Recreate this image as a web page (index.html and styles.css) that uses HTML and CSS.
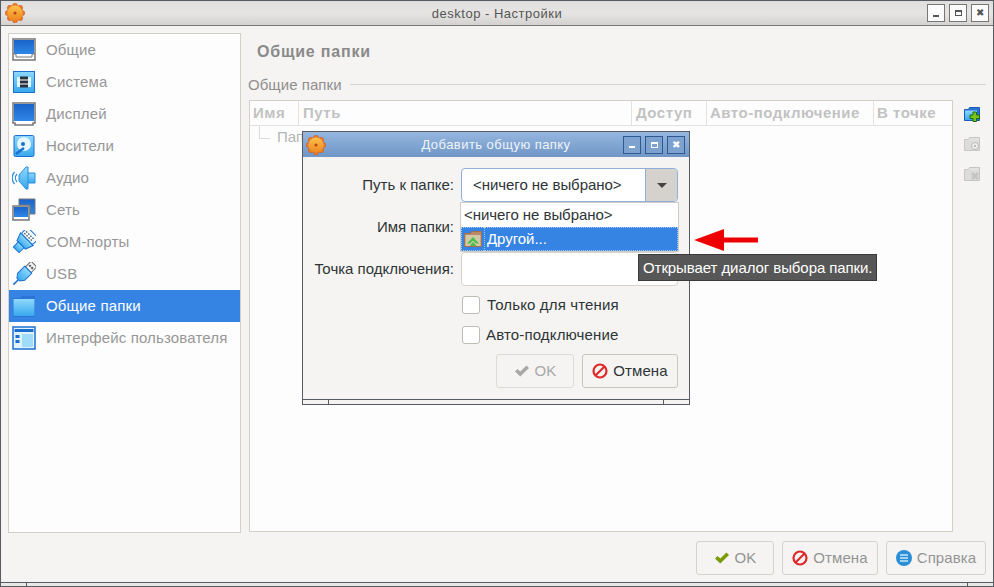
FILE: index.html
```html
<!DOCTYPE html>
<html lang="ru">
<head>
<meta charset="utf-8">
<title>desktop - Настройки</title>
<link rel="stylesheet" href="styles.css">
</head>
<body>
<svg class="defs" width="0" height="0" aria-hidden="true">
  <defs>
    <linearGradient id="gearg" x1="0" y1="0" x2="0" y2="1"><stop offset="0" stop-color="#fcc24a"/><stop offset="1" stop-color="#f0861f"/></linearGradient>
    <linearGradient id="sky" x1="0" y1="0" x2="0" y2="1"><stop offset="0" stop-color="#8fd8fb"/><stop offset="1" stop-color="#38a8ee"/></linearGradient>
    <linearGradient id="scr" x1="0" y1="0" x2="0" y2="1"><stop offset="0" stop-color="#1a63c9"/><stop offset="1" stop-color="#2f86e6"/></linearGradient>
    <symbol id="gear" viewBox="0 0 20 20">
      <g fill="#ea7a22" stroke="#c9582a" stroke-width=".5">
        <circle cx="10" cy="2.800" r="2.600"/><circle cx="10" cy="17.200" r="2.600"/><circle cx="2.800" cy="10" r="2.600"/><circle cx="17.200" cy="10" r="2.600"/>
        <circle cx="4.900" cy="4.900" r="2.600"/><circle cx="15.100" cy="4.900" r="2.600"/><circle cx="4.900" cy="15.100" r="2.600"/><circle cx="15.100" cy="15.100" r="2.600"/>
      </g>
      <circle cx="10" cy="10" r="7.600" fill="url(#gearg)"/>
      <circle cx="10" cy="10" r="1.500" fill="#b5451b"/>
    </symbol>
    <symbol id="folder-add" viewBox="0 0 16 16">
      <path d="M.5 3.500h4l1-2h10v13H.5z" fill="#2a74d6" stroke="#1a5cb8"/><rect x="1" y="4.500" width="12" height="9.500" fill="url(#sky)"/>
      <path d="M9 6h3.500v3H15.500v3.500h-3V15.500H9V12.500H6V9h3z" fill="#7ac41e" stroke="#1f6a10"/>
    </symbol>
    <symbol id="folder-gray" viewBox="0 0 16 16">
      <path d="M.5 3.500h4l1-2h10v13H.5z" fill="#e2e2e0" stroke="#c6c6c4"/><rect x="1" y="4.500" width="14" height="9.500" fill="#dcdcda"/>
    </symbol>
    <symbol id="check" viewBox="0 0 16 12"><path d="M1 6.500 3.500 4l2.800 2.600L12.500.5 15 3l-8.700 8.500z"/></symbol>
    <symbol id="cancel" viewBox="0 0 16 16"><circle cx="8" cy="8" r="6.500" fill="none" stroke="#e0282c" stroke-width="2.200"/><path d="M3.500 12.500l9-9" stroke="#e0282c" stroke-width="2.200"/></symbol>
  </defs>
</svg>

<div class="window">
  <header class="titlebar">
    <svg class="tb-icon"><use href="#gear"/></svg>
    <span class="tb-title">desktop - Настройки</span>
    <div class="tb-btns">
      <span class="tb-btn"><i class="g-min"></i></span>
      <span class="tb-btn"><i class="g-max"></i></span>
      <span class="tb-btn tb-x">✖</span>
    </div>
  </header>

  <div class="content">
    <nav class="sidebar">
      <div class="item"><svg class="ico" viewBox="0 0 24 24"><path d="M1 1h22v21H1z" fill="#fff" stroke="#777" stroke-width="1.500"/><rect x="2" y="2" width="20" height="14" fill="url(#scr)"/><path d="M1 16h3v3h16v-3h3" fill="none" stroke="#777"/></svg><span>Общие</span></div>
      <div class="item"><svg class="ico" viewBox="0 0 24 24"><rect x="1.500" y="1.500" width="21" height="21" fill="url(#sky)" stroke="#1c6fd0"/><rect x="5" y="7" width="14" height="10" fill="#d8f2ff"/><rect x="8" y="6.500" width="8" height="11" fill="#2a3440"/><path d="M5 10h14M5 14h14" stroke="#fff"/></svg><span>Система</span></div>
      <div class="item"><svg class="ico" viewBox="0 0 24 24"><path d="M1 1h22v20h-2v2H3v-2H1z" fill="#fff" stroke="#777" stroke-width="1.500"/><rect x="2" y="2" width="20" height="17" fill="url(#scr)"/></svg><span>Дисплей</span></div>
      <div class="item"><svg class="ico" viewBox="0 0 24 24"><rect x="2" y="1.500" width="20" height="21" rx="1.500" fill="url(#sky)" stroke="#1c6fd0"/><circle cx="12" cy="10" r="7" fill="#e6f7ff"/><circle cx="11" cy="10" r="2" fill="#1c6fd0"/><path d="M4 20l8-6" stroke="#1c6fd0" stroke-width="2.500"/></svg><span>Носители</span></div>
      <div class="item"><svg class="ico" viewBox="0 0 24 24"><path d="M15 7h8v10h-8z" fill="url(#sky)" stroke="#2b8de0"/><path d="M7 9l7-8h2v22h-2l-7-8z" fill="url(#sky)" stroke="#2b8de0"/><path d="M5 8a6 6 0 0 0 0 8M2.500 6a9 9 0 0 0 0 12" fill="none" stroke="#2b8de0" stroke-width="1.200"/></svg><span>Аудио</span></div>
      <div class="item"><svg class="ico" viewBox="0 0 24 24"><path d="M7 1h16v15h-5V7H7z" fill="url(#scr)" stroke="#777"/><path d="M1 8h16v14H1z" fill="#fff" stroke="#777" stroke-width="1.500"/><rect x="2" y="9" width="14" height="10" fill="url(#scr)"/></svg><span>Сеть</span></div>
      <div class="item"><svg class="ico" viewBox="0 0 24 24"><g transform="rotate(45 12 12)"><rect x="4" y="-1" width="16" height="9" rx="2" fill="#eef8ff" stroke="#1c6fd0"/><path d="M6 3h12M6 5.500h12" stroke="#555" stroke-width="1.300" stroke-dasharray="1.500 1.500"/><path d="M3 8h18l-3 8H6z" fill="url(#sky)" stroke="#1c6fd0"/><rect x="8" y="16" width="8" height="7" fill="url(#sky)" stroke="#1c6fd0"/></g></svg><span>COM-порты</span></div>
      <div class="item"><svg class="ico" viewBox="0 0 24 24"><g transform="rotate(45 12 12)"><rect x="8" y="-2" width="8" height="8" fill="#f6f6f6" stroke="#666"/><rect x="9.500" y="1" width="2" height="2" fill="#555"/><rect x="12.500" y="1" width="2" height="2" fill="#555"/><path d="M7 6h10v10l-3 4h-4l-3-4z" fill="url(#sky)" stroke="#1c6fd0"/><path d="M12 20v7" stroke="#1c6fd0" stroke-width="1.500"/></g></svg><span>USB</span></div>
      <div class="item active"><svg class="ico" viewBox="0 0 24 24"><path d="M1 4h7l2-2h13v21H1z" fill="#2a74d6"/><rect x="1.500" y="5" width="21" height="17" fill="url(#sky)"/></svg><span>Общие папки</span></div>
      <div class="item"><svg class="ico" viewBox="0 0 24 24"><rect x="1" y="1" width="22" height="22" fill="#dff3ff" stroke="#1c6fd0" stroke-width="1.500"/><rect x="2.500" y="3" width="19" height="3" fill="#1c6fd0"/><rect x="10" y="8" width="11" height="13" fill="#9fdcfa"/><rect x="3.500" y="9" width="4" height="3" fill="#1c6fd0"/><rect x="3.500" y="14" width="4" height="3" fill="#1c6fd0"/></svg><span>Интерфейс пользователя</span></div>
    </nav>

    <main class="main">
      <h1 class="page-title">Общие папки</h1>
      <div class="group-head"><span>Общие папки</span><i class="group-rule"></i></div>
      <div class="table-row">
        <section class="table">
          <div class="thead">
            <span class="th w1">Имя</span>
            <span class="th w2">Путь</span>
            <span class="th w3">Доступ</span>
            <span class="th w4">Авто-подключение</span>
            <span class="th w5">В точке</span>
          </div>
          <div class="tree"><i class="tree-line"></i><span>Папки машины</span></div>
        </section>
        <div class="side-tools">
          <svg class="tool"><use href="#folder-add"/></svg>
          <svg class="tool"><use href="#folder-gray"/><circle cx="11" cy="10" r="3.500" fill="#eee" stroke="#bbb"/><circle cx="11" cy="10" r="1" fill="#aaa"/></svg>
          <svg class="tool"><use href="#folder-gray"/><path d="M8 7l6 6M14 7l-6 6" stroke="#c4c4c2" stroke-width="2.500"/></svg>
        </div>
      </div>
    </main>
  </div>

  <footer class="footer">
    <button class="btn b-ok dim"><svg class="b-ico c-olive"><use href="#check"/></svg>OK</button>
    <button class="btn b-cancel dim"><svg class="b-ico"><use href="#cancel"/></svg>Отмена</button>
    <button class="btn b-help dim"><svg class="b-ico" viewBox="0 0 16 16"><circle cx="8" cy="8" r="8" fill="#2b8fd8"/><path d="M4 5h8M4 8h8M4 11h8" stroke="#cfe8f8" stroke-width="1.600"/></svg>Справка</button>
  </footer>
  <div class="strip strip-main"><i class="tick t1"></i><i class="tick t2"></i></div>

  <div class="dialog">
    <header class="d-title">
      <svg class="d-icon"><use href="#gear"/></svg>
      <span class="d-text">Добавить общую папку</span>
      <div class="d-btns">
        <span class="d-btn"><i class="g-min w"></i></span>
        <span class="d-btn"><i class="g-max w"></i></span>
        <span class="d-btn d-x">✖</span>
      </div>
    </header>
    <div class="form">
      <label class="lbl">Путь к папке:</label>
      <div class="combo"><span class="combo-text">&lt;ничего не выбрано&gt;</span><span class="combo-arrow"><i></i></span></div>
      <label class="lbl">Имя папки:</label>
      <div class="field"></div>
      <label class="lbl">Точка подключения:</label>
      <div class="field"></div>
      <label class="chk"><i class="box"></i><span class="pad">Только для чтения</span></label>
      <label class="chk"><i class="box"></i><span>Авто-подключение</span></label>
      <div class="d-actions">
        <button class="btn b-ok dim2"><svg class="b-ico c-gray"><use href="#check"/></svg>OK</button>
        <button class="btn b-cancel"><svg class="b-ico"><use href="#cancel"/></svg>Отмена</button>
      </div>
    </div>
    <div class="strip strip-dlg"><i class="tick t3"></i><i class="tick t4"></i></div>
  </div>

  <ul class="popup">
    <li class="pop-item">&lt;ничего не выбрано&gt;</li>
    <li class="pop-item sel">
      <svg class="pop-ico" viewBox="0 0 18 16"><path d="M.5 2.500h6l1-2h10v15H.5z" fill="#b98a68" stroke="#a06f50"/><rect x="1.500" y="4" width="15" height="11" fill="#d2c9a8"/><path d="M9 6l6 6.500h-3L9 9.500 6 12.500H3zM9 11l3.500 4h-7z" fill="#4fbf4a"/></svg>
      <span class="pop-label">Другой...</span>
    </li>
  </ul>

  <svg class="arrow" viewBox="0 0 64 22"><path d="M0 11 30 0v8.500h34v5H30V22z" fill="#ee0000"/></svg>

  <div class="tooltip">Открывает диалог выбора папки.</div>
</div>
</body>
</html>
```
FILE: styles.css
```css
* { box-sizing: border-box; }
html, body { margin: 0; padding: 0; }
body { width: 994px; height: 587px; overflow: hidden; font-family: "Liberation Sans", Arial, sans-serif; font-size: 15px; color: #2e3436; background: #fff; }
.defs { position: absolute; }
i { display: block; font-style: normal; }

.window { position: relative; width: 994px; height: 587px; display: flex; flex-direction: column; background: #f5f4f2; border: 1px solid #555b60; border-width: 1px 1px 0 1px; }

.titlebar { flex: none; height: 25px; display: flex; align-items: center; position: relative; background: linear-gradient(#dededc, #e6e5e3 50%, #d3d2d0); border-bottom: 1px solid #77787a; padding-left: 4px; }
.tb-icon { width: 20px; height: 20px; }
.tb-title { position: absolute; left: 0; right: 0; text-align: center; font-size: 13px; letter-spacing: .5px; color: #555; }
.tb-btns { margin-left: auto; display: flex; gap: 4px; padding-right: 4px; position: relative; }
.tb-btn { width: 18px; height: 18px; background: #fbfbfb; border: 1px solid #777; display: flex; align-items: center; justify-content: center; color: #555; font-size: 10px; line-height: 1; }
.g-min { width: 6px; height: 2px; background: #555; margin-top: 5px; }
.g-max { width: 7px; height: 6px; border: 1px solid #555; border-top-width: 2px; }
.g-min.w { background: #fff; }
.g-max.w { border-color: #fff; }

.content { flex: none; height: 508px; display: flex; padding: 7px 7px 0 7px; }
.sidebar { flex: none; width: 233px; height: 500px; background: #fdfdfd; border: 1px solid #d3cfc9; }
.item { height: 32px; display: flex; align-items: center; color: #979797; padding-left: 3px; }
.item span { margin: 0 0 2px 10px; letter-spacing: .15px; }
.item.active { background: #3584e4; color: #fff; }
.ico { width: 24px; height: 24px; flex: none; }

.main { flex: 1; min-width: 0; padding-left: 7px; display: flex; flex-direction: column; }
.page-title { margin: 9px 0 0 9px; font-size: 16px; line-height: 20px; font-weight: bold; color: #8a8a8a; letter-spacing: .8px; }
.group-head { margin-top: 14px; display: flex; align-items: center; height: 16px; color: #8f8f8f; letter-spacing: .05px; }
.group-rule { flex: 1; height: 1px; background: #d5d2cd; margin-left: 8px; }
.table-row { margin: 8px 0 0 1px; display: flex; height: 432px; }
.table { flex: none; width: 704px; height: 432px; background: #fdfdfd; border: 1px solid #d3cfc9; position: relative; }
.thead { display: flex; height: 25px; border-bottom: 1px solid #e4e2de; }
.th { border-right: 1px solid #e4e2de; padding-left: 3px; font-weight: bold; color: #c2c2c2; line-height: 24px; letter-spacing: .5px; overflow: hidden; white-space: nowrap; }
.w1 { width: 49px; } .w2 { width: 333px; padding-left: 4px; } .w3 { width: 75px; padding-left: 4px; } .w4 { width: 167px; } .w5 { width: 78px; border-right: 0; }
.tree { position: relative; padding: 2px 0 0 27px; color: #b5b5b5; line-height: 18px; }
.tree-line { position: absolute; left: 9px; top: 0; width: 11px; height: 13px; border-left: 1px solid #dcdcdc; border-bottom: 1px solid #dcdcdc; }
.side-tools { flex: none; margin-left: 11px; padding-top: 6px; display: flex; flex-direction: column; gap: 14px; }
.tool { width: 16px; height: 16px; }

.footer { flex: none; height: 48px; display: flex; justify-content: flex-end; gap: 8px; padding: 7px 7px 0 0; }
.btn { height: 34px; padding: 0 0 2px; background: #f5f4f2; border: 1px solid #d5d2cd; border-radius: 3px; font: 15px "Liberation Sans", Arial, sans-serif; color: #2e3436; display: flex; align-items: center; justify-content: center; letter-spacing: .1px; }
.b-ok { width: 78px; } .b-cancel { width: 96px; } .b-help { width: 100px; }
.dim { color: #949494; }
.dim2 { color: #a8a8a8; }
.b-ico { width: 16px; height: 16px; margin: 2px 5px 0 0; flex: none; }
.c-olive { fill: #7a9a01; } .c-gray { fill: #a8a8a8; }

.strip { position: relative; flex: none; height: 5px; border-top: 1px solid #555b60; border-bottom: 1px solid #555b60; background: #f5f4f2; }
.strip-main { margin-top: auto; background: #e8e8e6; }
.tick { position: absolute; top: 0; width: 1px; height: 4px; background: #555b60; }
.t1 { left: 25px; } .t2 { left: 966px; } .t3 { left: 25px; } .t4 { left: 360px; }

.dialog { position: absolute; left: 301px; top: 130px; width: 388px; height: 274px; background: #f5f4f2; border: 1px solid #555b60; display: flex; flex-direction: column; }
.d-title { flex: none; height: 25px; display: flex; align-items: center; position: relative; padding-left: 3px; background: linear-gradient(#95b6df, #6f96c6); color: #f0f4f8; }
.d-icon { width: 20px; height: 20px; }
.d-text { position: absolute; left: 0; right: 0; text-align: center; font-size: 13px; letter-spacing: .45px; }
.d-btns { margin-left: auto; display: flex; gap: 4px; padding-right: 4px; position: relative; }
.d-btn { width: 18px; height: 18px; border: 1px solid #2f5a90; background: #7ea2cf; display: flex; align-items: center; justify-content: center; color: #fff; font-size: 10px; line-height: 1; }

.form { flex: none; height: 242px; display: grid; grid-template-columns: 151px 217px; grid-template-rows: 34px 34px 34px 22px 22px 34px; column-gap: 7px; row-gap: 8px; padding: 11px 0 0 0; align-items: center; }
.lbl { text-align: right; white-space: nowrap; padding-bottom: 2px; }
.combo { height: 34px; display: flex; background: #fff; border: 1px solid #8fb0d8; border-radius: 4px; overflow: hidden; }
.combo-text { flex: 1; padding-left: 11px; line-height: 32px; letter-spacing: -.05px; }
.combo-arrow { width: 33px; margin: -1px -1px -1px 0; background: #d5d2cd; display: flex; align-items: center; justify-content: center; border-left: 1px solid #8fb0d8; }
.combo-arrow i { width: 0; height: 0; border: 5px solid transparent; border-top: 5px solid #444; border-bottom: 0; }
.field { height: 34px; background: #fff; border: 1px solid #d5d2cd; border-radius: 4px; }
.chk { grid-column: 2; height: 18px; display: flex; align-items: center; margin-left: 1px; letter-spacing: .15px; }
.chk span { margin: 0 0 2px 6px; }
.chk .pad { margin-left: 7px; }
.box { flex: none; width: 18px; height: 18px; background: #fff; border: 1px solid #c0bbb4; border-radius: 3px; }
.d-actions { grid-column: 2; display: flex; justify-content: flex-end; gap: 8px; }
.d-actions .b-ok { border-color: #dedbd6; }
.d-actions .b-cancel { border-color: #c9c6c0; }
.strip-dlg { margin-top: auto; border-bottom: 0; }

.popup { position: absolute; left: 459px; top: 201px; width: 219px; height: 50px; margin: 0; padding: 0; list-style: none; background: #fff; border: 1px solid #cfcbc5; }
.pop-item { height: 24px; padding-left: 3px; line-height: 24px; letter-spacing: -.05px; }
.pop-item.sel { background: #3584e4; color: #fff; display: flex; align-items: center; outline: 1px dotted #a9c9ee; outline-offset: -1px; padding-left: 3px; }
.pop-ico { width: 18px; height: 16px; flex: none; }
.pop-label { margin-left: 2px; padding-left: 2px; border-left: 1px dotted #a9c9ee; height: 24px; }

.arrow { position: absolute; left: 693px; top: 228px; width: 64px; height: 22px; }
.tooltip { position: absolute; left: 637px; top: 253px; width: 239px; height: 27px; background: #575757; border: 1px solid #3a3a3a; color: #fff; font-size: 15px; line-height: 25px; padding-left: 4px; letter-spacing: -.08px; white-space: nowrap; }
```
